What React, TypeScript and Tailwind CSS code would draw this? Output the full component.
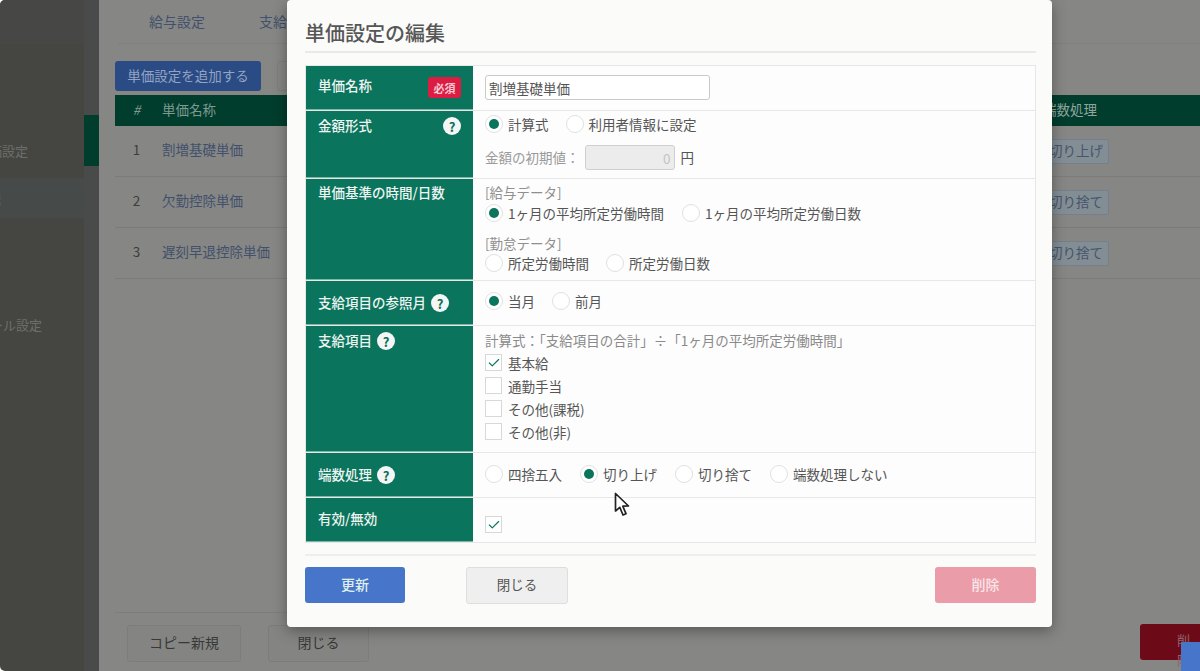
import { Check } from "lucide-react";

const font = "font-['Noto_Sans_CJK_JP','Liberation_Sans',sans-serif]";

const bgRows = [
  { no: 1, name: "割増基礎単価", round: "切り上げ" },
  { no: 2, name: "欠勤控除単価", round: "切り捨て" },
  { no: 3, name: "遅刻早退控除単価", round: "切り捨て" },
];

const Help = () => (
  <span className="mt-[2px] flex h-[18px] w-[18px] shrink-0 items-center justify-center rounded-full bg-[#f4f6f5] text-[13px] font-bold leading-none text-[#0a6e57]">?</span>
);

const Radio = ({ on, label }: { on?: boolean; label: string }) => (
  <span className="flex items-center gap-[5px]">
    <span className="flex h-[18px] w-[18px] items-center justify-center rounded-full border border-[#dfe2e0] bg-white">
      {on && <span className="h-[10px] w-[10px] rounded-full bg-[#0a755c]" />}
    </span>
    <span className="text-[13.5px] leading-5 text-[#555]">{label}</span>
  </span>
);

const Box = ({ on, label }: { on?: boolean; label?: string }) => (
  <span className="flex h-[23px] items-center gap-[6px]">
    <span className="flex h-[17px] w-[17px] items-center justify-center border border-[#d8d8d8] bg-white">
      {on && <Check size={14} strokeWidth={2} className="text-[#0a755c]" />}
    </span>
    {label && <span className="text-[13.5px] leading-5 text-[#555]">{label}</span>}
  </span>
);

const Row = ({ h, pt, label, children }: { h: string; pt: string; label: React.ReactNode; children: React.ReactNode }) => (
  <div className={`flex border-b border-[#e6e8e7] ${h}`}>
    <div className={`w-[167px] shrink-0 border-b border-[#7fb5a6] bg-[#0a755c] px-3 text-[13.5px] font-medium leading-5 text-[#eef4f2] ${pt}`}>
      {label}
    </div>
    <div className="min-w-0 flex-1 bg-[#fdfdfd] pl-3 pt-[3px]">{children}</div>
  </div>
);

export default function App() {
  return (
    <div className={`relative flex h-[671px] w-[1200px] overflow-hidden bg-white ${font}`}>
      {/* sidebar */}
      <aside className="relative w-[99px] shrink-0 rounded-l-[5px] bg-[#454641] text-[13px] text-[#6d6e6b]">
        <div className="h-[44px] rounded-tl-[5px] bg-[#474845]" />
        <div className="absolute bottom-0 right-0 top-0 w-[15px] bg-[#484b4a]" />
        <div className="absolute right-0 top-[115px] h-[51px] w-[15px] bg-[#013d2d]" />
        <div className="absolute left-0 top-[178px] h-[40px] w-[84px] bg-[#464a48]" />
        <p className="absolute -left-[24px] top-[141px]">単価設定</p>
        <p className="absolute -left-[12px] top-[189px]">理</p>
        <p className="absolute -left-[10px] top-[315px]">ール設定</p>
      </aside>

      {/* page behind the modal */}
      <main className="flex min-w-0 flex-1 flex-col bg-[#868785] pl-4">
        <nav className="ml-[3px] flex h-[44px] items-center gap-[54px] border-b border-[#7f807e] pl-[31px] text-[14px] text-[#42506b]">
          <span>給与設定</span>
          <span>支給項目</span>
        </nav>
        <div className="mt-[17px] flex gap-4">
          <button className="h-[30px] w-[146px] rounded-[3px] bg-[#2b4b85] pb-[2px] text-[13.5px] text-[#93a4c2]">単価設定を追加する</button>
          <button className="h-[30px] w-[60px] rounded-[3px] border border-[#7d7e7c] bg-[#858684]" />
        </div>
        <div className="mt-[4px] flex h-[31px] items-center bg-[#013d2d] pb-[3px] text-[13.5px] text-[#7c9a90]">
          <span className="w-[47px] pr-1 text-center italic">#</span>
          <span className="flex-1">単価名称</span>
          <span className="mr-[103px] shrink-0 text-[#8ea69e]">端数処理</span>
        </div>
        {bgRows.map((r) => (
          <div key={r.no} className="flex h-[51px] items-center border-b border-[#7b7c7a] text-[13.5px]">
            <span className="w-[47px] pb-[3px] pr-1 text-center text-[#3d3e3c]">{r.no}</span>
            <span className="flex-1 pb-[3px] text-[#42506b]">{r.name}</span>
            <span className="mr-[91px] flex h-[25px] w-[66px] shrink-0 items-center justify-end rounded-[2px] border border-[#74808a] bg-[#828e94] pb-[2px] pr-[5px] text-[#47546e]">{r.round}</span>
          </div>
        ))}
        <div className="mt-auto flex h-[59px] w-[800px] gap-[27px] border-t border-[#7d7e7c] pl-[12px] pt-[12px]">
          <button className="h-[37px] w-[114px] rounded-[3px] border border-[#7c7d7b] bg-[#848583] pb-[2px] text-[14px] text-[#383937]">コピー新規</button>
          <button className="h-[37px] w-[101px] rounded-[3px] border border-[#7c7d7b] bg-[#848583] pb-[2px] text-[14px] text-[#383937]">閉じる</button>
        </div>
      </main>

      <div className="absolute bottom-[11px] right-0 h-[36px] w-[60px] rounded-l-[3px] bg-[#6d0a17] pl-[37px] pt-[6px] text-[13px] text-[#94616a]">削除</div>
      <div className="absolute bottom-0 right-0 h-[29px] w-[19px] bg-[#4775c9]" />

      {/* modal */}
      <section className="absolute left-[287px] top-0 flex h-[627px] w-[765px] flex-col rounded-[4px] bg-[#fbfbfa] pl-[18px] pr-[16px] shadow-[0_4px_14px_rgba(0,0,0,0.35)]">
        <h2 className="flex h-[53px] items-end border-b-2 border-[#e8e9e8] pb-[4px] text-[20px] font-medium leading-7 text-[#565656]">単価設定の編集</h2>
        <div className="mt-[12px] border-x border-t border-[#e6e8e7]">
          <Row h="h-[45px]" pt="pt-[9px]" label={
            <span className="flex items-start justify-between">単価名称<span className="mt-[2px] flex h-[21px] w-[33px] items-center justify-center rounded-[3px] bg-[#dc1c42] text-[11px] font-bold text-[#f4c9d2]">必須</span></span>
          }>
            <input readOnly value="割増基礎単価" className="mt-[6px] h-[25px] w-[225px] rounded-[3px] border border-[#c9cbca] bg-white px-[3px] text-[13.5px] text-[#555] outline-none" />
          </Row>
          <Row h="h-[68px]" pt="pt-[4px]" label={<span className="flex items-start justify-between">金額形式<Help /></span>}>
            <div className="flex gap-[17px]">
              <Radio on label="計算式" />
              <Radio label="利用者情報に設定" />
            </div>
            <div className="mt-[11px] flex items-center text-[13.5px] text-[#9a9a9a]">
              金額の初期値：
              <span className="ml-[5px] h-[25px] w-[90px] rounded-[3px] border border-[#cfcfcf] bg-[#ececec] pr-[3px] text-right leading-6 text-[#c4c4c4]">0</span>
              <span className="ml-[6px] text-[#555]">円</span>
            </div>
          </Row>
          <Row h="h-[102px]" pt="pt-[3px]" label="単価基準の時間/日数">
            <p className="text-[13.5px] leading-5 text-[#8f8f8f]">[給与データ]</p>
            <div className="mt-[1px] flex gap-[18px]">
              <Radio on label="1ヶ月の平均所定労働時間" />
              <Radio label="1ヶ月の平均所定労働日数" />
            </div>
            <p className="mt-[11px] text-[13.5px] leading-[19px] text-[#8f8f8f]">[勤怠データ]</p>
            <div className="flex gap-[17px]">
              <Radio label="所定労働時間" />
              <Radio label="所定労働日数" />
            </div>
          </Row>
          <Row h="h-[45px]" pt="pt-[11px]" label={<span className="flex items-start gap-[5px]">支給項目の参照月<Help /></span>}>
            <div className="mt-[7px] flex gap-[17px]">
              <Radio on label="当月" />
              <Radio label="前月" />
            </div>
          </Row>
          <Row h="h-[127px]" pt="pt-[4px]" label={<span className="flex items-start gap-[5px]">支給項目<Help /></span>}>
            <p className="mt-[1px] text-[13.5px] leading-5 text-[#8a8a8a]">計算式：「支給項目の合計」÷「1ヶ月の平均所定労働時間」</p>
            <div className="flex flex-col items-start pt-[1px]">
              <Box on label="基本給" />
              <Box label="通勤手当" />
              <Box label="その他(課税)" />
              <Box label="その他(非)" />
            </div>
          </Row>
          <Row h="h-[45px]" pt="pt-[11px]" label={<span className="flex items-start gap-[5px]">端数処理<Help /></span>}>
            <div className="mt-[8px] flex gap-[18px]">
              <Radio label="四捨五入" />
              <Radio on label="切り上げ" />
              <Radio label="切り捨て" />
              <Radio label="端数処理しない" />
            </div>
          </Row>
          <Row h="h-[45px]" pt="pt-[10px]" label="有効/無効">
            <div className="mt-[12px]"><Box on /></div>
          </Row>
        </div>
        <div className="mt-[11px] flex border-t-2 border-[#eeeeed] pt-[11px]">
          <button className="h-[36px] w-[100px] rounded-[3px] bg-[#4775c9] pb-[2px] text-[14px] font-medium text-[#dff0ee]">更新</button>
          <button className="ml-[61px] h-[37px] w-[102px] rounded-[3px] border border-[#dedede] bg-[#efefef] pb-[2px] text-[13.5px] text-[#555]">閉じる</button>
          <button className="ml-auto h-[36px] w-[101px] rounded-[3px] bg-[#ea9ca8] pb-[2px] text-[14px] font-medium text-[#f8e6e8]">削除</button>
        </div>
      </section>

      {/* mouse pointer */}
      <svg className="absolute left-[614px] top-[492px]" width="17" height="26" viewBox="0 0 17 26">
        <path d="M1.5 1.5 L1.5 19 L5.8 15.3 L9 23 L12 21.7 L8.8 14.2 L14.5 14 Z" fill="#fff" stroke="#222" strokeWidth="1.7" strokeLinejoin="round" />
      </svg>
    </div>
  );
}
